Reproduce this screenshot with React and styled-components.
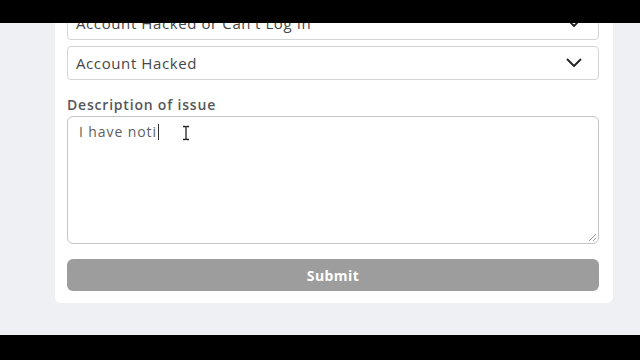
import styled, { createGlobalStyle } from "styled-components";

const GlobalStyle = createGlobalStyle`
  html, body {
    margin: 0;
    padding: 0;
    background: #000;
  }
  * {
    box-sizing: border-box;
  }
`;

const Screen = styled.div`
  width: 640px;
  height: 360px;
  background: #000;
  display: flex;
  flex-direction: column;
  font-family: "Open Sans", "Liberation Sans", sans-serif;
  overflow: hidden;
`;

const Letterbox = styled.div`
  height: ${(p) => p.h}px;
  flex: none;
  background: #000;
`;

const Viewport = styled.div`
  flex: none;
  height: 312px;
  background: #eff0f3;
  overflow: hidden;
  position: relative;
`;

const Card = styled.div`
  margin: -21px 0 0 55px;
  width: 558px;
  background: #fff;
  border-radius: 0 0 6px 6px;
  padding: 4px 14px 12px 12px;
  display: flex;
  flex-direction: column;
`;

const Select = styled.div`
  height: 34px;
  border: 1px solid #d4d5d7;
  border-radius: 4px;
  background: #fff;
  display: flex;
  align-items: center;
  justify-content: space-between;
  padding: 0 16px 0 8px;
  margin-bottom: 6px;
  font-size: 15px;
  letter-spacing: 0.6px;
  color: #45474a;
`;

const Chevron = () => (
  <svg width="16" height="10" viewBox="0 0 16 10">
    <polyline
      points="1.5,1.5 8,8 14.5,1.5"
      fill="none"
      stroke="#1f2023"
      strokeWidth="1.8"
      strokeLinecap="round"
      strokeLinejoin="round"
    />
  </svg>
);

const Label = styled.div`
  margin-top: 10px;
  font-size: 14px;
  font-weight: 600;
  letter-spacing: 0.8px;
  color: #55575a;
  line-height: 18px;
`;

const TextArea = styled.div`
  position: relative;
  margin-top: 2px;
  height: 128px;
  border: 1px solid #c4c5c7;
  border-radius: 6px;
  padding: 5px 11px;
  font-size: 14px;
  letter-spacing: 0.9px;
  color: #5e6063;
  line-height: 20px;
`;

const Caret = styled.span`
  display: inline-block;
  width: 1px;
  height: 16px;
  background: #333;
  vertical-align: -3px;
  margin-left: 1px;
`;

const Grip = styled.svg`
  position: absolute;
  right: 1px;
  bottom: 1px;
`;

const Pointer = styled.svg`
  position: absolute;
  left: 182px;
  top: 102px;
`;

const SubmitButton = styled.button`
  margin-top: 15px;
  height: 32px;
  border: none;
  border-radius: 6px;
  background: #9d9d9e;
  color: #fff;
  font-family: inherit;
  font-size: 14px;
  font-weight: 700;
  letter-spacing: 0.4px;
  cursor: default;
`;

export default function App() {
  return (
    <>
      <GlobalStyle />
      <Screen>
        <Letterbox h={23} />
        <Viewport>
          <Card>
            <Select>
              <span>Account Hacked or Can't Log In</span>
              <Chevron />
            </Select>
            <Select>
              <span>Account Hacked</span>
              <Chevron />
            </Select>
            <Label>Description of issue</Label>
            <TextArea>
              I have noti
              <Caret />
              <Grip width="10" height="10" viewBox="0 0 10 10">
                <line x1="9" y1="2" x2="2" y2="9" stroke="#999" strokeWidth="1" />
                <line x1="9" y1="6" x2="6" y2="9" stroke="#999" strokeWidth="1" />
              </Grip>
            </TextArea>
            <SubmitButton>Submit</SubmitButton>
          </Card>
          <Pointer width="8" height="16" viewBox="0 0 8 16">
            <path
              d="M1 1.5h2.2M4.8 1.5H7M4 2v12M1 14.5h2.2M4.8 14.5H7M3.2 1.5L4 2.3 4.8 1.5M3.2 14.5L4 13.7 4.8 14.5"
              fill="none"
              stroke="#222"
              strokeWidth="1.3"
            />
          </Pointer>
        </Viewport>
        <Letterbox h={25} />
      </Screen>
    </>
  );
}
